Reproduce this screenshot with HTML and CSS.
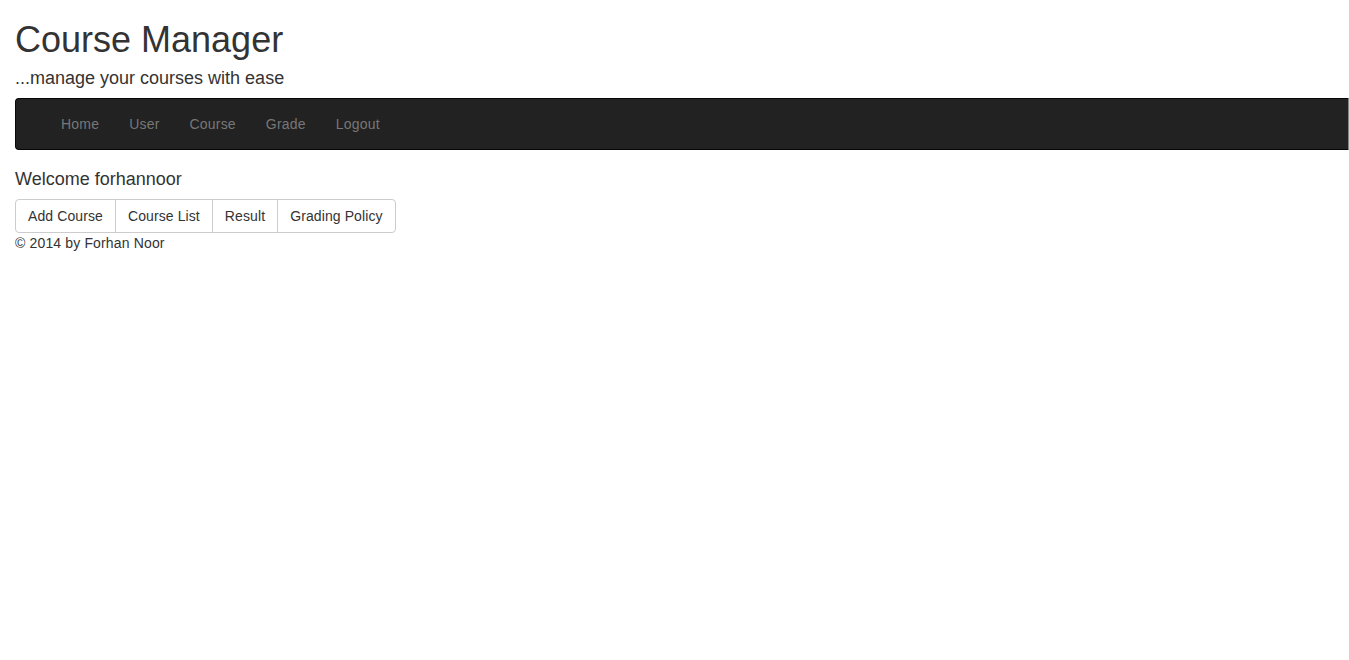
FILE: index.html
```html
<!DOCTYPE html>
<html>
<head>
<meta charset="utf-8">
<title>Course Manager</title>
<link rel="stylesheet" href="styles.css">
</head>
<body>
<div class="container">
  <header class="header">
    <h1 class="title">Course Manager</h1>
    <p class="subtitle">...manage your courses with ease</p>
  </header>
  <nav class="navbar">
    <ul class="nav">
      <li><a href="#">Home</a></li>
      <li><a href="#">User</a></li>
      <li><a href="#">Course</a></li>
      <li><a href="#">Grade</a></li>
      <li><a href="#">Logout</a></li>
    </ul>
  </nav>
  <h4 class="welcome">Welcome forhannoor</h4>
  <div class="btn-group">
    <a class="btn" href="#">Add Course</a>
    <a class="btn" href="#">Course List</a>
    <a class="btn" href="#">Result</a>
    <a class="btn" href="#">Grading Policy</a>
  </div>
  <footer class="footer">© 2014 by Forhan Noor</footer>
</div>
</body>
</html>
```
FILE: styles.css
```css
html, body {
  margin: 0;
  padding: 0;
  background: #fff;
}
body {
  font-family: "Liberation Sans", Arial, sans-serif;
  font-size: 14px;
  line-height: 1.42857;
  color: #333;
}
.container {
  padding-left: 15px;
}
.title {
  margin: 20px 0 0;
  font-size: 36px;
  font-weight: 500;
  line-height: 1.1;
}
.subtitle {
  margin: 9px 0 0;
  font-size: 18px;
  line-height: 1.1;
}
.navbar {
  margin-top: 10px;
  margin-bottom: 20px;
  min-height: 50px;
  background: #222;
  border: 1px solid #080808;
  border-right-color: #888;
  border-radius: 4px 0 0 4px;
  box-sizing: border-box;
  height: 52px;
  padding-left: 30px;
}
.nav {
  list-style: none;
  margin: 0;
  padding: 0;
  display: flex;
}
.nav a {
  display: block;
  padding: 15px;
  line-height: 20px;
  color: #777;
  text-decoration: none;
  letter-spacing: 0.2px;
}
.welcome {
  margin: 0 0 9px;
  font-size: 18px;
  font-weight: 500;
  line-height: 1.1;
}
.btn-group {
  display: inline-flex;
}
.btn {
  display: block;
  padding: 6px 12px;
  line-height: 20px;
  font-size: 14px;
  color: #333;
  text-decoration: none;
  background: #fff;
  border: 1px solid #ccc;
  margin-left: -1px;
  letter-spacing: 0.1px;
}
.btn:first-child {
  margin-left: 0;
  border-radius: 4px 0 0 4px;
}
.btn:last-child {
  border-radius: 0 4px 4px 0;
}
.footer {
  line-height: 20px;
  letter-spacing: 0.15px;
}
```
